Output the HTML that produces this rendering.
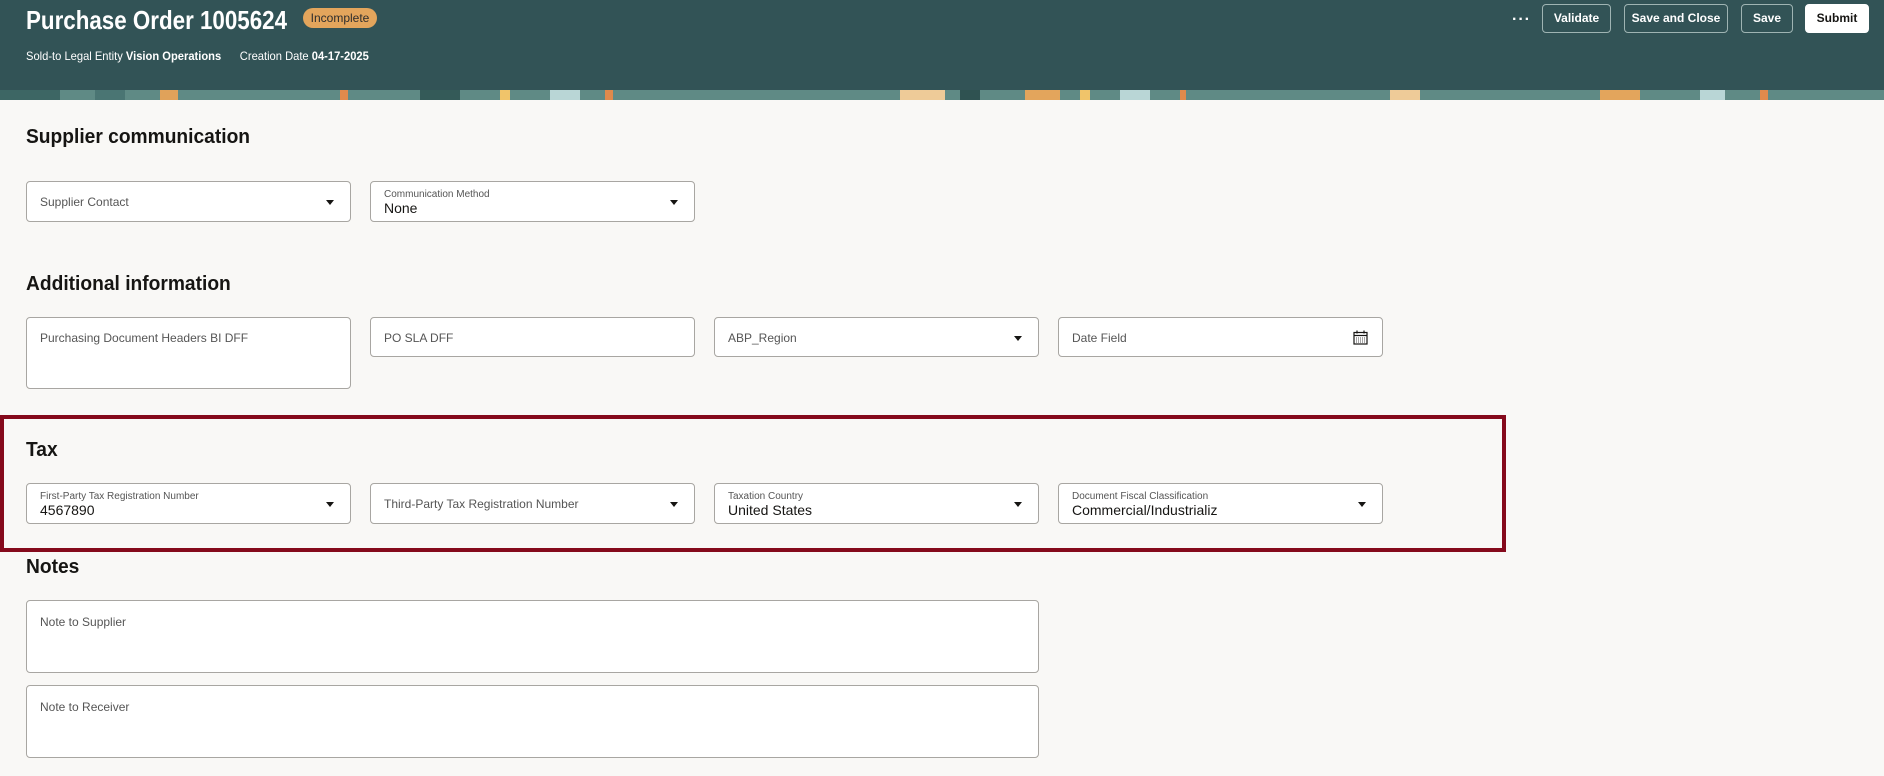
<!DOCTYPE html>
<html><head><meta charset="utf-8"><style>
*{box-sizing:border-box;margin:0;padding:0}
body{width:1884px;height:776px;overflow:hidden;background:#f9f8f6;font-family:"Liberation Sans",sans-serif;color:#161513;position:relative}
.hdr{position:absolute;left:0;top:0;width:1884px;height:90px;background:#325356}
.band{position:absolute;left:0;top:90px;width:1884px;height:10px;background:#5f8a85;overflow:hidden}
.band i{position:absolute;top:0;height:10px;display:block}
.title{position:absolute;left:26px;top:5px;font-size:26px;font-weight:bold;color:#fff;transform:scaleX(0.86);transform-origin:0 0;white-space:nowrap}
.badge{position:absolute;left:303px;top:8px;width:74px;height:20px;border-radius:10px;background:#e3a55c;color:#2d2d2d;font-size:12px;text-align:center;line-height:20px}
.sub{position:absolute;left:26px;top:49px;font-size:12px;color:#fff;transform:scaleX(0.93);transform-origin:0 0;white-space:nowrap}
.btn{position:absolute;top:4px;height:29px;border:1px solid #9fb4b3;border-radius:4px;color:#fff;font-size:12px;font-weight:bold;text-align:center;line-height:27px}
.dots{position:absolute;left:1512px;top:11px;color:#fff;font-size:16px;font-weight:bold;letter-spacing:1px}
h2{position:absolute;left:26px;font-size:20px;font-weight:bold;color:#161513;transform:scaleX(0.96);transform-origin:0 0;white-space:nowrap}
.f{position:absolute;height:41px;width:325px;background:#fff;border:1px solid #a8a6a2;border-radius:4px}
.f .l{position:absolute;left:13px;top:13px;font-size:12px;color:#555}
.f .sl{position:absolute;left:13px;top:7px;font-size:10px;color:#555}
.f .v{position:absolute;left:13px;top:18px;font-size:14px;color:#161513}
.f .a{position:absolute;right:16px;top:18px;width:0;height:0;border-left:4px solid transparent;border-right:4px solid transparent;border-top:5px solid #161513}
.tax{position:absolute;left:0;top:415px;width:1506px;height:137px;border:4px solid #850a1c}
</style></head><body>
<div class="hdr"></div>
<div class="band">
<i style="left:0;width:60px;background:#3d6664"></i>
<i style="left:95px;width:30px;background:#4a7573"></i>
<i style="left:160px;width:18px;background:#e0a25a"></i>
<i style="left:340px;width:8px;background:#e08a4c"></i>
<i style="left:420px;width:40px;background:#345a58"></i>
<i style="left:500px;width:10px;background:#f0c46a"></i>
<i style="left:550px;width:30px;background:#b9d6d6"></i>
<i style="left:605px;width:8px;background:#e08a4c"></i>
<i style="left:900px;width:45px;background:#eecb98"></i>
<i style="left:960px;width:20px;background:#2f5251"></i>
<i style="left:1025px;width:35px;background:#e3a55c"></i>
<i style="left:1080px;width:10px;background:#f0c46a"></i>
<i style="left:1120px;width:30px;background:#b9d6d6"></i>
<i style="left:1180px;width:6px;background:#e08a4c"></i>
<i style="left:1390px;width:30px;background:#eecb98"></i>
<i style="left:1600px;width:40px;background:#e3a55c"></i>
<i style="left:1700px;width:25px;background:#b9d6d6"></i>
<i style="left:1760px;width:8px;background:#e08a4c"></i>
</div>
<div class="title">Purchase Order 1005624</div>
<div class="badge">Incomplete</div>
<div class="sub">Sold-to Legal Entity <b>Vision Operations</b>&nbsp;&nbsp;&nbsp;&nbsp;&nbsp; Creation Date <b>04-17-2025</b></div>
<div class="dots">···</div>
<div class="btn" style="left:1542px;width:69px">Validate</div>
<div class="btn" style="left:1624px;width:104px">Save and Close</div>
<div class="btn" style="left:1741px;width:52px">Save</div>
<div class="btn" style="left:1805px;width:64px;background:#fff;color:#161513;border-color:#fff">Submit</div>

<h2 style="top:126px">Supplier communication</h2>
<div class="f" style="left:26px;top:181px"><span class="l">Supplier Contact</span><span class="a"></span></div>
<div class="f" style="left:370px;top:181px"><span class="sl">Communication Method</span><span class="v">None</span><span class="a"></span></div>

<h2 style="top:273px">Additional information</h2>
<div class="f" style="left:26px;top:317px;height:72px"><span class="l">Purchasing Document Headers BI DFF</span></div>
<div class="f" style="left:370px;top:317px;height:40px"><span class="l">PO SLA DFF</span></div>
<div class="f" style="left:714px;top:317px;height:40px"><span class="l">ABP_Region</span><span class="a"></span></div>
<div class="f" style="left:1058px;top:317px;height:40px"><span class="l">Date Field</span>
<svg style="position:absolute;right:14px;top:12px" width="15" height="15" viewBox="0 0 15 15"><rect x="1" y="2.5" width="13" height="11.5" fill="none" stroke="#161513" stroke-width="1.2"/><line x1="1" y1="5.5" x2="14" y2="5.5" stroke="#161513" stroke-width="1.2"/><line x1="4" y1="0.5" x2="4" y2="3.5" stroke="#161513" stroke-width="1.2"/><line x1="11" y1="0.5" x2="11" y2="3.5" stroke="#161513" stroke-width="1.2"/><path d="M3 8h9M3 10h9M3 12h9" stroke="#161513" stroke-width="0.8" stroke-dasharray="1 1"/></svg></div>

<div class="tax"></div>
<h2 style="top:439px">Tax</h2>
<div class="f" style="left:26px;top:483px"><span class="sl">First-Party Tax Registration Number</span><span class="v">4567890</span><span class="a"></span></div>
<div class="f" style="left:370px;top:483px"><span class="l">Third-Party Tax Registration Number</span><span class="a"></span></div>
<div class="f" style="left:714px;top:483px"><span class="sl">Taxation Country</span><span class="v">United States</span><span class="a"></span></div>
<div class="f" style="left:1058px;top:483px"><span class="sl">Document Fiscal Classification</span><span class="v">Commercial/Industrializ</span><span class="a"></span></div>

<h2 style="top:556px">Notes</h2>
<div class="f" style="left:26px;top:600px;width:1013px;height:73px"><span class="l" style="top:14px">Note to Supplier</span></div>
<div class="f" style="left:26px;top:685px;width:1013px;height:73px"><span class="l" style="top:14px">Note to Receiver</span></div>
</body></html>
